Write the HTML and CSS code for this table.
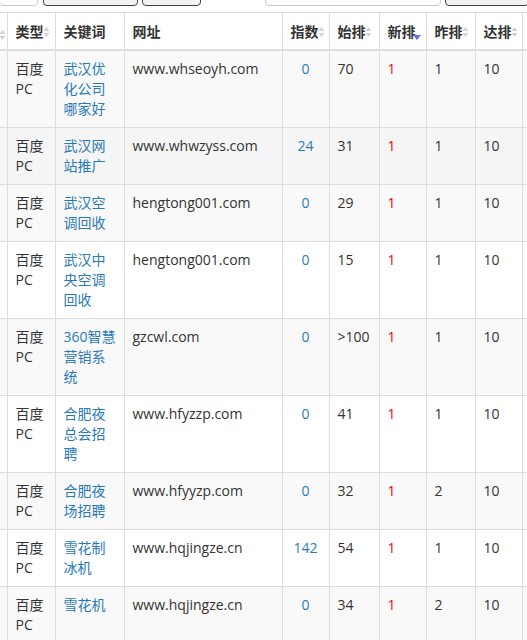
FILE: index.html
```html
<!DOCTYPE html>
<html lang="zh-CN">
<head>
<meta charset="utf-8">
<title>关键词排名</title>
<link rel="stylesheet" href="styles.css">
</head>
<body>
<div class="page">
<div class="toolbar">
  <span class="ctl ctl-input ctl-a"></span>
  <span class="ctl ctl-btn ctl-b"></span>
  <span class="ctl ctl-btn ctl-c"></span>
  <span class="spacer"></span>
  <span class="ctl ctl-input ctl-d"></span>
  <span class="ctl ctl-btn ctl-e"></span>
</div>
<div class="table-wrap">
<table class="grid">
  <colgroup>
    <col class="c0"><col class="c1"><col class="c2"><col class="c3"><col class="c4"><col class="c5"><col class="c6"><col class="c7"><col class="c8"><col class="c9">
  </colgroup>
  <thead>
    <tr>
      <th class="stub"><svg class="sort stub-sort" viewBox="0 0 7 12"><path d="M0.5 5 L3.5 1 L6.5 5 Z M0.5 7 L3.5 11 L6.5 7 Z"/></svg></th>
      <th>类型<svg class="sort" viewBox="0 0 7 12"><path d="M0.5 5 L3.5 1 L6.5 5 Z M0.5 7 L3.5 11 L6.5 7 Z"/></svg></th>
      <th>关键词</th>
      <th>网址</th>
      <th>指数<svg class="sort" viewBox="0 0 7 12"><path d="M0.5 5 L3.5 1 L6.5 5 Z M0.5 7 L3.5 11 L6.5 7 Z"/></svg></th>
      <th>始排<svg class="sort" viewBox="0 0 7 12"><path d="M0.5 5 L3.5 1 L6.5 5 Z M0.5 7 L3.5 11 L6.5 7 Z"/></svg></th>
      <th>新排<svg class="sort-desc" viewBox="0 0 8 5"><path d="M0 0 L8 0 L4 5 Z"/></svg></th>
      <th>昨排<svg class="sort" viewBox="0 0 7 12"><path d="M0.5 5 L3.5 1 L6.5 5 Z M0.5 7 L3.5 11 L6.5 7 Z"/></svg></th>
      <th>达排<svg class="sort" viewBox="0 0 7 12"><path d="M0.5 5 L3.5 1 L6.5 5 Z M0.5 7 L3.5 11 L6.5 7 Z"/></svg></th>
      <th></th>
    </tr>
  </thead>
  <tbody>
    <tr class="odd">
      <td></td><td>百度<br>PC</td><td class="kw">武汉优化公司哪家好</td><td>www.whseoyh.com</td>
      <td class="idx">0</td><td>70</td><td class="new">1</td><td>1</td><td>10</td><td></td>
    </tr>
    <tr class="hover">
      <td></td><td>百度<br>PC</td><td class="kw">武汉网站推广</td><td>www.whwzyss.com</td>
      <td class="idx">24</td><td>31</td><td class="new">1</td><td>1</td><td>10</td><td></td>
    </tr>
    <tr class="odd">
      <td></td><td>百度<br>PC</td><td class="kw">武汉空调回收</td><td>hengtong001.com</td>
      <td class="idx">0</td><td>29</td><td class="new">1</td><td>1</td><td>10</td><td></td>
    </tr>
    <tr>
      <td></td><td>百度<br>PC</td><td class="kw">武汉中央空调回收</td><td>hengtong001.com</td>
      <td class="idx">0</td><td>15</td><td class="new">1</td><td>1</td><td>10</td><td></td>
    </tr>
    <tr class="odd">
      <td></td><td>百度<br>PC</td><td class="kw">360智慧营销系统</td><td>gzcwl.com</td>
      <td class="idx">0</td><td>&gt;100</td><td class="new">1</td><td>1</td><td>10</td><td></td>
    </tr>
    <tr>
      <td></td><td>百度<br>PC</td><td class="kw">合肥夜总会招聘</td><td>www.hfyzzp.com</td>
      <td class="idx">0</td><td>41</td><td class="new">1</td><td>1</td><td>10</td><td></td>
    </tr>
    <tr class="odd">
      <td></td><td>百度<br>PC</td><td class="kw">合肥夜场招聘</td><td>www.hfyyzp.com</td>
      <td class="idx">0</td><td>32</td><td class="new">1</td><td>2</td><td>10</td><td></td>
    </tr>
    <tr>
      <td></td><td>百度<br>PC</td><td class="kw">雪花制冰机</td><td>www.hqjingze.cn</td>
      <td class="idx">142</td><td>54</td><td class="new">1</td><td>1</td><td>10</td><td></td>
    </tr>
    <tr class="odd">
      <td></td><td>百度<br>PC</td><td class="kw">雪花机</td><td>www.hqjingze.cn</td>
      <td class="idx">0</td><td>34</td><td class="new">1</td><td>2</td><td>10</td><td></td>
    </tr>
  </tbody>
</table>
</div>
</div>
</body>
</html>
```
FILE: styles.css
```css
html, body {
  margin: 0;
  padding: 0;
  background: #fff;
  overflow: hidden;
}
body {
  font-family: "Open Sans", "Noto Sans CJK SC", sans-serif;
  font-size: 14px;
  line-height: 20px;
  color: #333;
}
.page {
  width: 527px;
  height: 640px;
  overflow: hidden;
}
.toolbar {
  height: 6px;
  overflow: hidden;
  display: flex;
  align-items: flex-end;
  margin-bottom: 6px;
}
.ctl {
  display: block;
  height: 30px;
  box-sizing: border-box;
  border-radius: 4px;
  flex: none;
}
.ctl-input {
  border: 1px solid #ccc;
  background: #fff;
}
.ctl-btn {
  border: 1px solid #444;
  background: linear-gradient(#fff, #f2f2f2);
}
.ctl-a { width: 39px; margin-left: -1px; }
.ctl-b { width: 95px; margin-left: 5px; }
.ctl-c { width: 59px; margin-left: 4px; }
.spacer { flex: none; width: 64px; }
.ctl-d { width: 176px; }
.ctl-e { width: 84px; margin-left: 4px; }

.table-wrap {
  width: 527px;
  overflow: hidden;
}
.grid {
  border-collapse: collapse;
  table-layout: fixed;
  width: 580px;
}
.c0 { width: 7px; }
.c1 { width: 48px; }
.c2 { width: 69px; }
.c3 { width: 158px; }
.c4 { width: 47px; }
.c5 { width: 50px; }
.c6 { width: 47px; }
.c7 { width: 49px; }
.c8 { width: 47px; }
.c9 { width: 58px; }

.grid th, .grid td {
  border: 1px solid #ddd;
  padding: 8px 8px;
  text-align: left;
  vertical-align: top;
  word-break: break-all;
}
.grid tr > :first-child {
  border-left: none;
  padding: 8px 0;
}
.grid th {
  font-family: "Noto Sans CJK SC", sans-serif;
  font-weight: bold;
  color: #333;
  border-bottom: 2px solid #ddd;
  position: relative;
  white-space: nowrap;
  overflow: hidden;
}
tbody tr.odd { background: #f9f9f9; }
tbody tr.hover { background: #f5f5f5; }
.kw { color: #2a7ab8; }
.idx { color: #2a7ab8; text-align: center !important; }
.new { color: #f00; }

.sort {
  display: inline-block;
  width: 7px;
  height: 12px;
  margin-left: -1px;
  vertical-align: -1px;
  fill: #d3d3d3;
}
.sort-desc {
  display: inline-block;
  width: 8px;
  height: 5px;
  margin-left: -3px;
  vertical-align: -3px;
  fill: #6a6ae8;
}
.stub-sort {
  position: absolute;
  right: 1px;
  top: 16px;
}
```
